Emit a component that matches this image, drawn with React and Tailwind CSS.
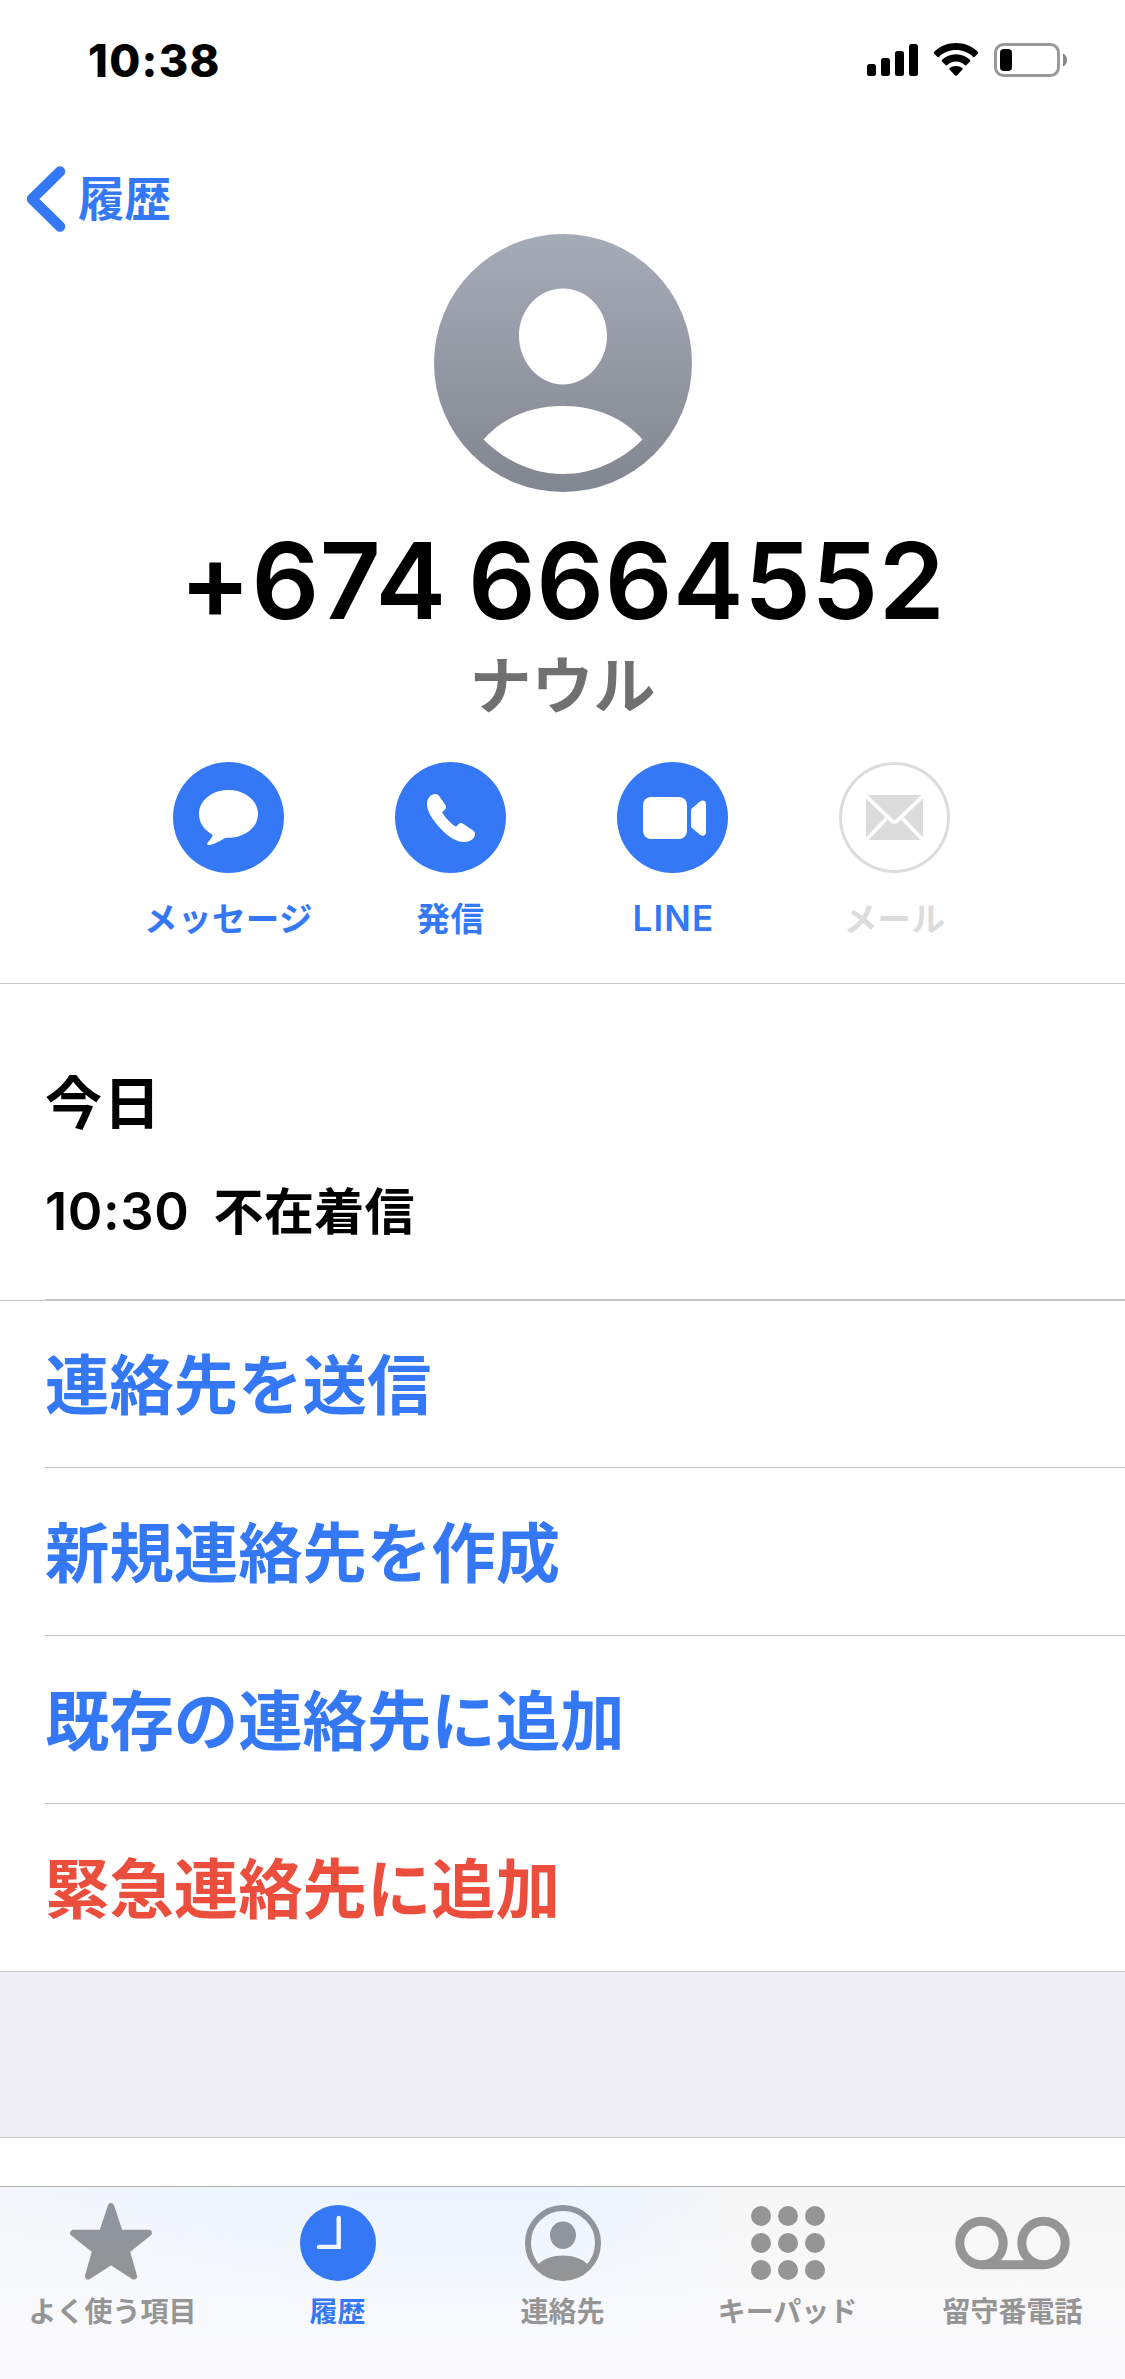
import { clsx } from 'clsx';

const ACTIONS = [
  { id: 'message', label: 'メッセージ', Icon: MessageIcon },
  { id: 'call', label: '発信', Icon: PhoneIcon },
  { id: 'line', label: 'LINE', Icon: VideoIcon, latin: true },
  { id: 'mail', label: 'メール', Icon: MailIcon, disabled: true },
];

const CONTACT_OPTIONS = [
  { id: 'share', label: '連絡先を送信' },
  { id: 'create', label: '新規連絡先を作成' },
  { id: 'add', label: '既存の連絡先に追加' },
  { id: 'emergency', label: '緊急連絡先に追加', danger: true },
];

const TABS = [
  { id: 'favorites', label: 'よく使う項目', Icon: StarIcon },
  { id: 'recents', label: '履歴', Icon: ClockIcon, active: true },
  { id: 'contacts', label: '連絡先', Icon: ContactIcon },
  { id: 'keypad', label: 'キーパッド', Icon: KeypadIcon },
  { id: 'voicemail', label: '留守番電話', Icon: VoicemailIcon },
];

function MessageIcon() {
  return (
    <svg viewBox="0 0 111 111" className="size-full" fill="currentColor">
      <path d="M55.5 28C72 28 85 38.5 85 52S72 75.8 55.5 75.8C54 75.8 52.8 75.8 51.8 76.2C46.5 79 41 82.7 36 83C34 83 33.8 81.8 34.8 80.5C37 78 39 75.8 39.7 72.8C31.5 68.5 26 61 26 52C26 38.5 39 28 55.5 28Z" />
    </svg>
  );
}

function PhoneIcon() {
  return (
    <svg viewBox="0 0 111 111" className="size-full" fill="currentColor">
      <path d="M40.5 32C42.2 32 43.6 33 44.5 34.5L50.3 42.8C51.5 44.6 51.3 46.2 49.9 47.6L47.8 49.6C47.3 50.1 47.3 50.8 47.7 51.4C50.5 55.8 55.5 61 59.7 64C60.4 64.6 61.2 64.6 61.8 64L63.8 62C65.2 60.7 66.8 60.7 68.5 61.9L77.8 68.3C79.4 69.4 80.1 70.6 80 72.3C79.6 77 75 80 69 80C62 80 54 75.5 45.5 66.5C37 57.5 32 49 32 42C32 36 35.7 32 40.5 32Z" />
    </svg>
  );
}

function VideoIcon() {
  return (
    <svg viewBox="0 0 111 111" className="size-full" fill="currentColor">
      <rect x="26" y="35" width="44" height="42" rx="8" />
      <path d="M74 48.5C74 47.5 74.3 46.8 75 46.2L83 39.6C85.5 37.7 89 38.4 89 42V70.3C89 73.9 85.5 74.6 83 72.7L75 66C74.3 65.4 74 64.8 74 63.8Z" />
    </svg>
  );
}

function MailIcon() {
  return (
    <svg viewBox="0 0 111 111" className="size-full" fill="none">
      <rect x="27" y="33" width="57" height="45" rx="3" fill="currentColor" />
      <g stroke="white" strokeWidth="3.8">
        <path d="M26 33L52 58.2C54.2 60.4 56.8 60.4 59 58.2L85 33" />
        <path d="M26 79L47.5 56.5M85 79L63.5 56.5" />
      </g>
    </svg>
  );
}

function StarIcon() {
  return (
    <svg viewBox="0 0 82 77" className="mr-[3px] mb-1 h-[77px] w-[82px]">
      <path
        d="M41 3.5L49.8 30H78.6L56.5 47.6L63.8 73.3L41 58.5L18.2 73.3L25.5 47.6L3.4 30H32.2Z"
        fill="url(#tab-grey)"
        stroke="url(#tab-grey)"
        strokeWidth="6.6"
        strokeLinejoin="round"
      />
    </svg>
  );
}

function ClockIcon() {
  return (
    <svg viewBox="0 0 76 76" className="size-[76px]" fill="none">
      <circle cx="38" cy="38" r="38" fill="currentColor" />
      <path d="M38.7 13V41.9H19" stroke="#f2f7fe" strokeWidth="4.4" strokeLinecap="round" />
    </svg>
  );
}

function ContactIcon() {
  return (
    <svg viewBox="0 0 76 76" className="size-[76px]" fill="none">
      <circle cx="38" cy="38" r="35" stroke="url(#tab-grey)" strokeWidth="6" />
      <path
        d="M38 16.5C45.5 16.5 51 22.5 51 30S45.5 44 38 44S25 37.5 25 30S30.5 16.5 38 16.5ZM38 50.5C48 50.5 57 53.5 63 59.5C57 68.5 48 74 38 74S19 68.5 13 59.5C19 53.5 28 50.5 38 50.5Z"
        fill="url(#tab-grey)"
      />
    </svg>
  );
}

function KeypadIcon() {
  return (
    <svg viewBox="0 0 74 74" className="size-[74px]" fill="currentColor">
      {[10, 37, 64].map((cy) => [10, 37, 64].map((cx) => <circle key={`${cx}-${cy}`} cx={cx} cy={cy} r="10" />))}
    </svg>
  );
}

function VoicemailIcon() {
  return (
    <svg viewBox="0 0 115 54" className="h-[54px] w-[115px]" fill="none" stroke="currentColor" strokeWidth="9">
      <circle cx="26.5" cy="27" r="21.7" />
      <circle cx="88.5" cy="27" r="21.7" />
      <path d="M26.5 48.7H88.5" />
    </svg>
  );
}

function StatusBar() {
  return (
    <div className="flex h-[120px] items-center justify-between pl-[88px] pr-[57px]">
      <span className="text-[45px] font-extrabold leading-none tracking-[1.3px]">10:38</span>
      <div className="flex items-center">
        <svg viewBox="0 0 51 34" className="h-[34px] w-[51px]">
          <rect x="0" y="21" width="9" height="12" rx="2.5" />
          <rect x="14" y="15" width="9" height="18" rx="2.5" />
          <rect x="28" y="8" width="9" height="25" rx="2.5" />
          <rect x="42" y="1" width="9" height="32" rx="2.5" />
        </svg>
        <svg viewBox="0 0 46 34" className="ml-[15px] h-[34px] w-[46px]">
          <path d="M23 0C31.5 0 39 3.3 44.8 8.7C45.4 9.3 45.4 9.9 44.9 10.5L41.7 13.7C41.1 14.3 40.5 14.2 39.9 13.7C35.3 9.5 29.5 7.1 23 7.1S10.7 9.5 6.1 13.7C5.5 14.2 4.9 14.3 4.3 13.7L1.1 10.5C.6 9.9.6 9.3 1.2 8.7C7 3.3 14.5 0 23 0Z" />
          <path d="M23 11.3C28.5 11.3 33.3 13.4 36.9 16.8C37.5 17.4 37.5 18 37 18.6L33.5 22C32.9 22.6 32.3 22.5 31.7 22C29.3 19.9 26.3 18.5 23 18.5S16.7 19.9 14.3 22C13.7 22.5 13.1 22.6 12.5 22L9 18.6C8.5 18 8.5 17.4 9.1 16.8C12.7 13.4 17.5 11.3 23 11.3Z" />
          <path d="M23 22.9C25.4 22.9 27.5 23.7 29.2 25.1C29.8 25.7 29.8 26.2 29.3 26.8L23.9 32.4C23.3 33 22.7 33 22.1 32.4L16.7 26.8C16.2 26.2 16.2 25.7 16.8 25.1C18.5 23.7 20.6 22.9 23 22.9Z" />
        </svg>
        <svg viewBox="0 0 74 34" className="ml-[15px] h-[34px] w-[74px]">
          <rect x="1.5" y="1.5" width="63" height="31" rx="8" fill="none" stroke="#999" strokeWidth="3" />
          <rect x="6" y="6" width="12" height="22" rx="4" />
          <path d="M69 10.5C71.5 11.5 73 14 73 17S71.5 22.5 69 23.5Z" fill="#888" />
        </svg>
      </div>
    </div>
  );
}

function Avatar() {
  return (
    <svg viewBox="0 0 259 258" className="h-[258px] w-[259px]">
      <defs>
        <linearGradient id="avatar-grey" x1="0" y1="0" x2="0" y2="1">
          <stop offset="0" stopColor="#a6abb8" />
          <stop offset="1" stopColor="#828690" />
        </linearGradient>
      </defs>
      <circle cx="130" cy="129" r="129" fill="url(#avatar-grey)" />
      <path
        d="M130 54.5C155 54.5 174 76 174 102S154 150.5 130 150.5S86 128 86 102S105 54.5 130 54.5ZM130 172C163 172 191 184 209.5 205.5C188 227 160 240 130 240S72 227 50.5 205.5C69 184 97 172 130 172Z"
        fill="white"
      />
    </svg>
  );
}

function ActionButton({ action }) {
  const { Icon, label, disabled, latin } = action;

  return (
    <button className={clsx('flex w-[222px] flex-col items-center', disabled ? 'text-[#dcdcdc]' : 'text-[#3478f6]')}>
      <span
        className={clsx(
          'size-[111px] rounded-full',
          disabled ? 'shadow-[inset_0_0_0_3px_#dcdcdc]' : 'bg-[#3478f6] text-white'
        )}
      >
        <Icon />
      </span>
      <span
        className={clsx(
          'mt-6 h-10 whitespace-nowrap leading-10',
          latin
            ? 'pl-[2px] pt-px text-[35px] font-semibold tracking-[1.2px]'
            : 'font-["Noto_Sans_CJK_JP",sans-serif] text-[33.5px] font-bold tracking-[0.4px]'
        )}
      >
        {label}
      </span>
    </button>
  );
}

function TabBar() {
  return (
    <nav className="flex h-[193px] border-t border-[#b0b0b3] bg-[linear-gradient(to_bottom,transparent,#fafafc_85%),linear-gradient(to_right,#f4f6fa,#ebf4ff_32%,#ebf4ff_50%,#f6f6f6_66%)]">
      {TABS.map(({ id, label, Icon, active }) => (
        <button
          key={id}
          className={clsx('flex w-1/5 flex-col items-center pt-[15px]', active ? 'text-[#3478f6]' : 'text-[#959595]')}
        >
          <span className="flex h-[82px] items-center justify-center">
            <Icon />
          </span>
          <span className='mt-[6px] whitespace-nowrap font-["Noto_Sans_CJK_JP",sans-serif] text-[28px] font-bold leading-10'>
            {label}
          </span>
        </button>
      ))}
    </nav>
  );
}

export default function App() {
  return (
    <div className='flex h-[2379px] w-[1125px] flex-col overflow-hidden bg-white font-["Inter","Noto_Sans_CJK_JP",sans-serif] text-black'>
      {/* Shared fill for the inactive tab icons */}
      <svg className="absolute size-0">
        <defs>
          <linearGradient id="tab-grey" x1="0" y1="0" x2="0" y2="1">
            <stop offset="0" stopColor="#8e95a1" />
            <stop offset="1" stopColor="#949494" />
          </linearGradient>
        </defs>
      </svg>

      {/* Contact header */}
      <header className="flex h-[984px] flex-col border-b border-[#c8c8ca]">
        <StatusBar />
        <button className="flex h-[114px] items-start pl-[26px] pt-[46px] text-[#3478f6]">
          <svg viewBox="0 0 40 66" className="h-[66px] w-10" fill="none" stroke="currentColor">
            <path d="M34 5.5L6 33L34 60.5" strokeWidth="10.5" strokeLinecap="round" strokeLinejoin="round" />
          </svg>
          <span className='ml-3 font-["Noto_Sans_CJK_JP",sans-serif] text-[46.5px] font-bold leading-[60px]'>履歴</span>
        </button>
        <div className="flex flex-col items-center">
          <Avatar />
          <h1 className="mt-[25px] h-32 whitespace-nowrap text-[106px] font-semibold leading-[128px] tracking-[0.6px] [word-spacing:-6px]">
            <span className="inline-block">+</span>674 6664552
          </h1>
          <p className='h-[72px] pt-px font-["Noto_Sans_CJK_JP",sans-serif] text-[62px] font-bold leading-[72px] text-[#707070]'>
            ナウル
          </p>
        </div>
        <div className="mt-[45px] flex pl-[117.5px]">
          {ACTIONS.map((action) => (
            <ActionButton key={action.id} action={action} />
          ))}
        </div>
      </header>

      {/* Call history */}
      <section className="h-[315px] pl-[45px] pt-20">
        <h2 className='font-["Noto_Sans_CJK_JP",sans-serif] text-[57px] font-bold leading-[70px] tracking-[1.5px]'>今日</h2>
        <div className="mt-11 flex h-[60px] items-baseline leading-[60px]">
          <span className="text-[52.5px] font-semibold tracking-[0.6px]">10:30</span>
          <span className='ml-6 font-["Noto_Sans_CJK_JP",sans-serif] text-[50px] font-bold tracking-[0.3px]'>不在着信</span>
        </div>
      </section>
      <div className="ml-[45px] h-px bg-[#c6c6c8]" />

      {/* Contact options */}
      <ul className="border-y border-[#c6c6c8]">
        {CONTACT_OPTIONS.map((option) => (
          <li
            key={option.id}
            className={clsx(
              'ml-[45px] flex h-[168px] items-center border-b border-[#c6c6c8] pb-[5px] font-["Noto_Sans_CJK_JP",sans-serif] text-[64.4px] font-bold leading-none first:h-[167px] last:h-[167px] last:border-b-0',
              option.danger ? 'text-[#eb4e3d]' : 'text-[#3478f6]'
            )}
          >
            {option.label}
          </li>
        ))}
      </ul>
      <div className="h-[166px] border-b border-[#c6c6c8] bg-[#f0eff5]" />
      <div className="h-12" />

      <TabBar />
    </div>
  );
}
